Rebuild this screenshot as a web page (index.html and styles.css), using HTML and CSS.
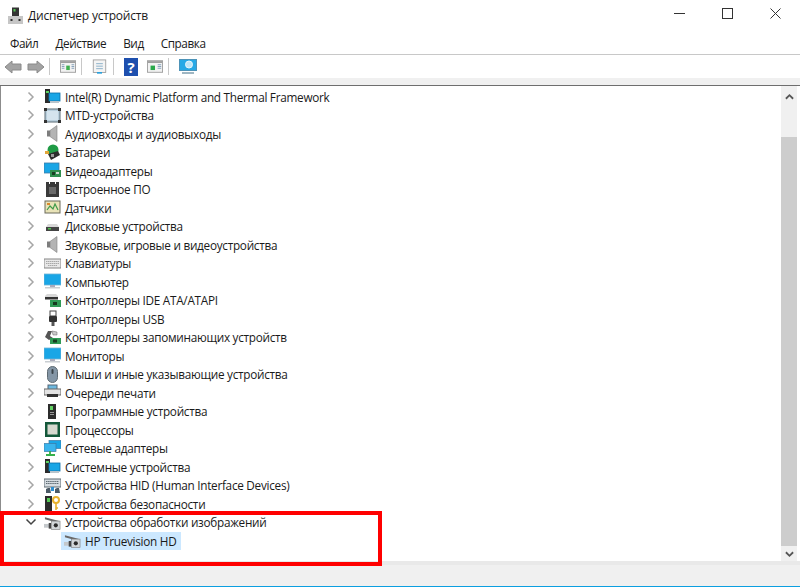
FILE: index.html
```html
<!DOCTYPE html>
<html lang="ru">
<head>
<meta charset="utf-8">
<title>Диспетчер устройств</title>
<link rel="stylesheet" href="styles.css">
</head>
<body>
<svg class="defs" width="0" height="0" aria-hidden="true">
  <symbol id="chev" viewBox="0 0 8 12"><path d="M1.500 1.500 6 6l-4.500 4.500" fill="none" stroke="#a6a6a6" stroke-width="1.500"/></symbol>
  <symbol id="sys" viewBox="0 0 17 17"><rect x="1" y="1" width="5" height="14" fill="#2b2b2b"/><rect x="2" y="3" width="3" height="2" fill="#5fd35f"/><rect x="5" y="5" width="11" height="8" fill="#19a6e6" stroke="#0b6fa8" stroke-width=".8"/><rect x="6" y="13" width="9" height="2" fill="#b9c4cc"/></symbol>
  <symbol id="mtd" viewBox="0 0 17 17"><rect x="1" y="2" width="15" height="13" rx="1" fill="#b9cfdd" stroke="#5b6b75"/><rect x="3" y="4" width="11" height="9" fill="#d5e4ee"/><rect x="0" y="1" width="3" height="3" fill="#333"/><rect x="14" y="1" width="3" height="3" fill="#333"/><rect x="0" y="13" width="3" height="3" fill="#333"/><rect x="14" y="13" width="3" height="3" fill="#333"/></symbol>
  <symbol id="spk" viewBox="0 0 17 17"><path d="M3 5.500h3v6H3z" fill="#7d7d7d"/><path d="M6 5.500l7-5v16l-7-5z" fill="#b4b4b4" stroke="#808080" stroke-width=".6"/></symbol>
  <symbol id="bat" viewBox="0 0 17 17"><circle cx="9" cy="6" r="5.500" fill="#1f9b45"/><path d="M4 10l10-3 2 4-9 5z" fill="#2c2c2c"/><rect x="1" y="7" width="4" height="3" fill="#e0a63a"/><rect x="7" y="10" width="3" height="3" fill="#999"/></symbol>
  <symbol id="vid" viewBox="0 0 17 17"><rect x="0" y="1" width="15" height="10" fill="#19a6e6" stroke="#3d7aa5" stroke-width=".8"/><rect x="6" y="8" width="11" height="7" fill="#2f8f4e"/><rect x="8" y="10" width="3" height="3" fill="#1a3d24"/><rect x="12" y="10" width="3" height="2" fill="#cfd8cf"/></symbol>
  <symbol id="fw" viewBox="0 0 17 17"><path d="M2 1h3v2h1V1h5v2h1V1h3v15H2z" fill="#3a3a3a"/><rect x="5" y="6" width="7" height="7" fill="#6b6b6b"/></symbol>
  <symbol id="sen" viewBox="0 0 17 17"><rect x="1" y="2" width="15" height="12" fill="#e9e3b8" stroke="#6a6a5a"/><path d="M3 11l3-4 3 3 2-5 3 6" fill="none" stroke="#3e9a4a" stroke-width="1.200"/><rect x="3" y="4" width="3" height="2" fill="#d9892b"/></symbol>
  <symbol id="dsk" viewBox="0 0 17 17"><path d="M2 9l2-3h9l2 3v4H2z" fill="#d8d8d8"/><rect x="2" y="9" width="13" height="4" fill="#444"/><rect x="4" y="10" width="3" height="1.500" fill="#4fc04f"/></symbol>
  <symbol id="kbd" viewBox="0 0 17 17"><rect x="0" y="4" width="17" height="9" fill="#e8e8e8" stroke="#868686"/><path d="M2 6.500h13M2 8.500h13M4 10.500h9" stroke="#a8a8a8" stroke-width="1" stroke-dasharray="1.500 .5"/></symbol>
  <symbol id="pc" viewBox="0 0 17 17"><rect x="0" y="1" width="17" height="11" fill="#19a6e6" stroke="#6fb4d6" stroke-width=".8"/><rect x="6" y="12" width="5" height="2" fill="#aab"/><rect x="1" y="14" width="15" height="1.500" fill="#c9ced2"/></symbol>
  <symbol id="ide" viewBox="0 0 17 17"><path d="M1 4l2-2h9l2 2v3H1z" fill="#d8d8d8"/><rect x="1" y="5" width="13" height="2.500" fill="#333"/><rect x="6" y="8" width="11" height="7" fill="#2f9a55"/><rect x="9" y="10" width="4" height="3" fill="#16391f"/></symbol>
  <symbol id="usb" viewBox="0 0 17 17"><rect x="6" y="1" width="6" height="5" fill="#fff" stroke="#444"/><rect x="5" y="6" width="8" height="6" rx="1" fill="#333"/><rect x="7.500" y="12" width="3" height="4" fill="#555"/></symbol>
  <symbol id="sto" viewBox="0 0 17 17"><path d="M1 8l3-6h4l-2 5 3 2-4 2z" fill="#555"/><rect x="6" y="9" width="11" height="6" fill="#2f9a55"/><rect x="9" y="10.500" width="4" height="3" fill="#16391f"/><path d="M8 2l5 1 0 3-4 0z" fill="#c9c9c9" stroke="#666" stroke-width=".5"/></symbol>
  <symbol id="mou" viewBox="0 0 17 17"><rect x="3.500" y="0.500" width="10" height="16" rx="5" fill="#8496a6" stroke="#5e6a72"/><rect x="7.500" y="3" width="2" height="5" rx="1" fill="#3b444a"/></symbol>
  <symbol id="prn" viewBox="0 0 17 17"><rect x="4" y="1" width="9" height="5" fill="#6cb8de" stroke="#567"/><rect x="0" y="5" width="17" height="6" fill="#e4e4e4" stroke="#666"/><rect x="3" y="10" width="11" height="3" fill="#333"/></symbol>
  <symbol id="sof" viewBox="0 0 17 17"><rect x="4" y="1" width="8" height="15" fill="#2c2c2c"/><rect x="6" y="3" width="3" height="4" fill="#62d162"/><rect x="6" y="9" width="4" height="1" fill="#999"/><rect x="6" y="11" width="4" height="1" fill="#999"/></symbol>
  <symbol id="cpu" viewBox="0 0 17 17"><rect x="1" y="1" width="15" height="15" fill="#14583a"/><rect x="3.500" y="3.500" width="10" height="10" fill="#d7d9cf"/></symbol>
  <symbol id="net" viewBox="0 0 17 17"><rect x="5" y="0.500" width="12" height="8" fill="#19a6e6" stroke="#3d7aa5" stroke-width=".7"/><rect x="0" y="3.500" width="12" height="8" fill="#3ab4ec" stroke="#3d7aa5" stroke-width=".7"/><path d="M6 11v3M2 15h9" stroke="#35b04a" stroke-width="1.800"/></symbol>
  <symbol id="hid" viewBox="0 0 17 17"><rect x="0" y="2" width="17" height="8" fill="#d4dbe0" stroke="#5f6b73"/><path d="M2 4.500h13M2 6.500h13" stroke="#5f6b73" stroke-dasharray="1.500 .6"/><path d="M2 16v-4l2-1h2l1 5zM11 16v-4l2-1h2l1 5z" fill="#4b5a66"/><rect x="7" y="10" width="3" height="4" fill="#2f8fd0"/></symbol>
  <symbol id="sec" viewBox="0 0 17 17"><rect x="1" y="1" width="7" height="15" fill="#2c2c2c"/><rect x="3" y="3" width="3" height="4" fill="#55c955"/><circle cx="12" cy="5" r="3" fill="none" stroke="#e8b22e" stroke-width="2"/><path d="M12 8v7M12 13h2" stroke="#e8b22e" stroke-width="1.600"/></symbol>
  <symbol id="cam" viewBox="0 0 18 17"><path d="M1 3l15 4-1 2L1 5z" fill="#6a6a6a"/><rect x="8" y="7" width="9" height="9" fill="#d2d6d9" stroke="#777" stroke-width=".6"/><circle cx="12.500" cy="11.500" r="2.200" fill="#2b2b2b"/><rect x="0" y="10" width="7" height="4" fill="#c4c8cb"/><rect x="5" y="9" width="2.500" height="6" fill="#444"/></symbol>
</svg>

<header class="titlebar">
  <svg class="title-icon" viewBox="0 0 15 17"><rect x="4" y="0.500" width="7" height="9" fill="#333"/><rect x="5.500" y="2" width="2" height="2.500" fill="#56c156"/><rect x="0" y="9" width="15" height="8" fill="#c6c6c6"/><rect x="2.500" y="12" width="2" height="2" fill="#333"/><rect x="10.500" y="12" width="2" height="2" fill="#333"/></svg>
  <span class="title-text">Диспетчер устройств</span>
  <div class="win-btns">
    <svg class="win-btn" viewBox="0 0 11 11"><path d="M0 5.500h11" stroke="#333" stroke-width="1"/></svg>
    <svg class="win-btn" viewBox="0 0 11 11"><rect x="0.500" y="0.500" width="10" height="10" fill="none" stroke="#333"/></svg>
    <svg class="win-btn" viewBox="0 0 11 11"><path d="M.5.500l10 10M10.500.500l-10 10" stroke="#333" stroke-width="1"/></svg>
  </div>
</header>

<nav class="menubar">
  <span>Файл</span><span>Действие</span><span>Вид</span><span>Справка</span>
</nav>

<div class="toolbar">
  <svg class="tb-arrow" viewBox="0 0 18 14"><path d="M1 7l7-6v3h9v6H8v3z" fill="#a3a3a3" stroke="#8a8a8a"/></svg>
  <svg class="tb-arrow" viewBox="0 0 18 14"><path d="M17 7l-7-6v3H1v6h9v3z" fill="#a3a3a3" stroke="#8a8a8a"/></svg>
  <i class="tb-sep"></i>
  <svg class="tb-icon" viewBox="0 0 18 16"><rect x="0.500" y="1.500" width="17" height="13" fill="#f2f2f2" stroke="#9a9a9a"/><rect x="1" y="2" width="16" height="2" fill="#9a9a9a"/><rect x="7" y="7" width="4" height="5" fill="#3fb04f"/><path d="M2 6h3M2 8h3M2 10h3M13 6h3M13 8h3M13 10h3" stroke="#7a9ab5"/></svg>
  <i class="tb-sep"></i>
  <svg class="tb-icon tb-page" viewBox="0 0 18 18"><rect x="1.500" y="0.500" width="15" height="15" fill="#f4f4f4" stroke="#9a9a9a"/><path d="M5 5h8M5 8h8M5 11h8" stroke="#7aa5c2"/><rect x="6" y="15" width="6" height="2" fill="#2aa0dc"/></svg>
  <i class="tb-sep"></i>
  <svg class="tb-help" viewBox="0 0 14 18"><rect width="14" height="18" fill="#1d4fae"/><text x="7" y="14.500" class="tb-q">?</text></svg>
  <svg class="tb-icon" viewBox="0 0 18 16"><rect x="0.500" y="1.500" width="17" height="13" fill="#f2f2f2" stroke="#9a9a9a"/><rect x="1" y="2" width="16" height="2" fill="#9a9a9a"/><rect x="4" y="7" width="5" height="5" fill="#2aa84a"/><path d="M12 6h4M12 8h4M12 10h4" stroke="#7a9ab5"/></svg>
  <i class="tb-sep"></i>
  <svg class="tb-scan" viewBox="0 0 18 16"><rect x="0.500" y="0.500" width="17" height="11" fill="#27a9e6" stroke="#4d93b8"/><circle cx="10" cy="5.500" r="3.500" fill="#bfe6f7" stroke="#e8f6fc"/><path d="M3 14h12" stroke="#9fb6c2" stroke-width="2"/></svg>
</div>

<div class="band"></div>

<main class="content">
  <ul class="tree">
    <li class="row"><svg class="chev"><use href="#chev"/></svg><svg class="ico"><use href="#sys"/></svg><span>Intel(R) Dynamic Platform and Thermal Framework</span></li>
    <li class="row"><svg class="chev"><use href="#chev"/></svg><svg class="ico"><use href="#mtd"/></svg><span>MTD-устройства</span></li>
    <li class="row"><svg class="chev"><use href="#chev"/></svg><svg class="ico"><use href="#spk"/></svg><span>Аудиовходы и аудиовыходы</span></li>
    <li class="row"><svg class="chev"><use href="#chev"/></svg><svg class="ico"><use href="#bat"/></svg><span>Батареи</span></li>
    <li class="row"><svg class="chev"><use href="#chev"/></svg><svg class="ico"><use href="#vid"/></svg><span>Видеоадаптеры</span></li>
    <li class="row"><svg class="chev"><use href="#chev"/></svg><svg class="ico"><use href="#fw"/></svg><span>Встроенное ПО</span></li>
    <li class="row"><svg class="chev"><use href="#chev"/></svg><svg class="ico"><use href="#sen"/></svg><span>Датчики</span></li>
    <li class="row"><svg class="chev"><use href="#chev"/></svg><svg class="ico"><use href="#dsk"/></svg><span>Дисковые устройства</span></li>
    <li class="row"><svg class="chev"><use href="#chev"/></svg><svg class="ico"><use href="#spk"/></svg><span>Звуковые, игровые и видеоустройства</span></li>
    <li class="row"><svg class="chev"><use href="#chev"/></svg><svg class="ico"><use href="#kbd"/></svg><span>Клавиатуры</span></li>
    <li class="row"><svg class="chev"><use href="#chev"/></svg><svg class="ico"><use href="#pc"/></svg><span>Компьютер</span></li>
    <li class="row"><svg class="chev"><use href="#chev"/></svg><svg class="ico"><use href="#ide"/></svg><span>Контроллеры IDE ATA/ATAPI</span></li>
    <li class="row"><svg class="chev"><use href="#chev"/></svg><svg class="ico"><use href="#usb"/></svg><span>Контроллеры USB</span></li>
    <li class="row"><svg class="chev"><use href="#chev"/></svg><svg class="ico"><use href="#sto"/></svg><span>Контроллеры запоминающих устройств</span></li>
    <li class="row"><svg class="chev"><use href="#chev"/></svg><svg class="ico"><use href="#pc"/></svg><span>Мониторы</span></li>
    <li class="row"><svg class="chev"><use href="#chev"/></svg><svg class="ico"><use href="#mou"/></svg><span>Мыши и иные указывающие устройства</span></li>
    <li class="row"><svg class="chev"><use href="#chev"/></svg><svg class="ico"><use href="#prn"/></svg><span>Очереди печати</span></li>
    <li class="row"><svg class="chev"><use href="#chev"/></svg><svg class="ico"><use href="#sof"/></svg><span>Программные устройства</span></li>
    <li class="row"><svg class="chev"><use href="#chev"/></svg><svg class="ico"><use href="#cpu"/></svg><span>Процессоры</span></li>
    <li class="row"><svg class="chev"><use href="#chev"/></svg><svg class="ico"><use href="#net"/></svg><span>Сетевые адаптеры</span></li>
    <li class="row"><svg class="chev"><use href="#chev"/></svg><svg class="ico"><use href="#sys"/></svg><span>Системные устройства</span></li>
    <li class="row"><svg class="chev"><use href="#chev"/></svg><svg class="ico"><use href="#hid"/></svg><span>Устройства HID (Human Interface Devices)</span></li>
    <li class="row"><svg class="chev"><use href="#chev"/></svg><svg class="ico"><use href="#sec"/></svg><span>Устройства безопасности</span></li>
    <li class="row"><svg class="chev open" viewBox="0 0 12 8"><path d="M1.500 1.500 6 6l4.500-4.500" fill="none" stroke="#444" stroke-width="1.500"/></svg><svg class="ico"><use href="#cam"/></svg><span>Устройства обработки изображений</span></li>
    <li class="row child"><div class="selected"><svg class="ico"><use href="#cam"/></svg><span>HP Truevision HD</span></div></li>
  </ul>
  <div class="scrollbar">
    <svg class="sb-arrow" viewBox="0 0 10 7"><path d="M1 6l4-4 4 4" fill="none" stroke="#555" stroke-width="2"/></svg>
    <div class="sb-gap"></div>
    <div class="sb-thumb"></div>
    <svg class="sb-arrow sb-down" viewBox="0 0 10 7"><path d="M1 1l4 4 4-4" fill="none" stroke="#555" stroke-width="2"/></svg>
  </div>
</main>

<footer class="status"></footer>

<div class="redbox"></div>
</body>
</html>
```
FILE: styles.css
```css
* { box-sizing: border-box; }
html, body { margin: 0; padding: 0; }
body {
  width: 800px;
  height: 587px;
  overflow: hidden;
  position: relative;
  display: flex;
  flex-direction: column;
  background: #fff;
  color: #1a1a1a;
  font-family: "Open Sans", "Noto Sans", "Liberation Sans", sans-serif;
  font-size: 11.750px;
  letter-spacing: -0.270px;
}
.defs { position: absolute; }

.titlebar {
  height: 30px;
  display: flex;
  align-items: center;
  padding-left: 8px;
  flex: none;
}
.title-icon { width: 15px; height: 17px; margin-right: 5px; }
.title-text { font-size: 12px; letter-spacing: -0.200px; }
.win-btns { margin-left: auto; display: flex; height: 100%; align-items: center; margin-top: -3px; padding-right: 19px; gap: 37px; }
.win-btn { width: 11px; height: 11px; }

.menubar {
  height: 25px;
  flex: none;
  display: flex;
  align-items: center;
  gap: 17px;
  padding: 1px 0 0 10px;
  border-bottom: 1px solid #c8c8c8;
  letter-spacing: -0.420px;
}

.toolbar {
  height: 23px;
  flex: none;
  display: flex;
  align-items: center;
  padding-left: 4px;
}
.tb-arrow { width: 18px; height: 14px; margin-right: 5px; }
.tb-arrow + .tb-arrow { margin-right: 4px; }
.tb-sep { width: 1px; height: 17px; background: #c8c8c8; margin-right: 10px; flex: none; }
.tb-icon { width: 16px; height: 15px; margin-right: 5px; }
.tb-page { width: 15px; height: 18px; margin-right: 6px; }
.tb-help { width: 14px; height: 18px; margin-right: 9px; }
.tb-scan { width: 18px; height: 16px; }
.tb-q { font-size: 15px; font-weight: 700; fill: #fff; text-anchor: middle; }

.band { height: 8px; flex: none; background: #f0f0f0; border-bottom: 1px solid #6e6e6e; }

.content {
  height: 475px;
  flex: none;
  display: flex;
  border-left: 1px solid #8c8c8c;
}
.tree {
  list-style: none;
  margin: 0;
  padding: 1.500px 0 0 0;
  flex: 1;
  min-width: 0;
}
.row {
  height: 18.500px;
  display: flex;
  align-items: center;
  padding-left: 26px;
  white-space: nowrap;
}
.chev { width: 8px; height: 12px; margin-right: 9px; flex: none; }
.chev.open { width: 12px; height: 8px; margin: 0 7px 0 -2px; }
.ico { width: 17px; height: 17px; margin-right: 4px; flex: none; }
.row.child { padding-left: 60px; }
.selected {
  display: flex;
  align-items: center;
  height: 18.500px;
  width: 120px;
  background: #cce8ff;
  padding-left: 3px;
}
.selected .ico { margin-right: 4px; }

.scrollbar {
  width: 16px;
  flex: none;
  margin-right: 3px;
  background: #f0f0f0;
  display: flex;
  flex-direction: column;
}
.sb-arrow { width: 9px; height: 7px; margin: 7px auto 0; flex: none; }
.sb-gap { height: 37px; flex: none; }
.sb-thumb { flex: 1; background: #cdcdcd; }
.sb-down { margin: 5px auto 3px; }

.status {
  flex: 1;
  background: #f0f0f0;
  border-top: 4px solid #e9e9e9;
  border-bottom: 1px solid #0c9fe0;
}

.redbox {
  position: absolute;
  left: 0;
  top: 511px;
  width: 382px;
  height: 55px;
  border: 4px solid #ff0000;
}
```
